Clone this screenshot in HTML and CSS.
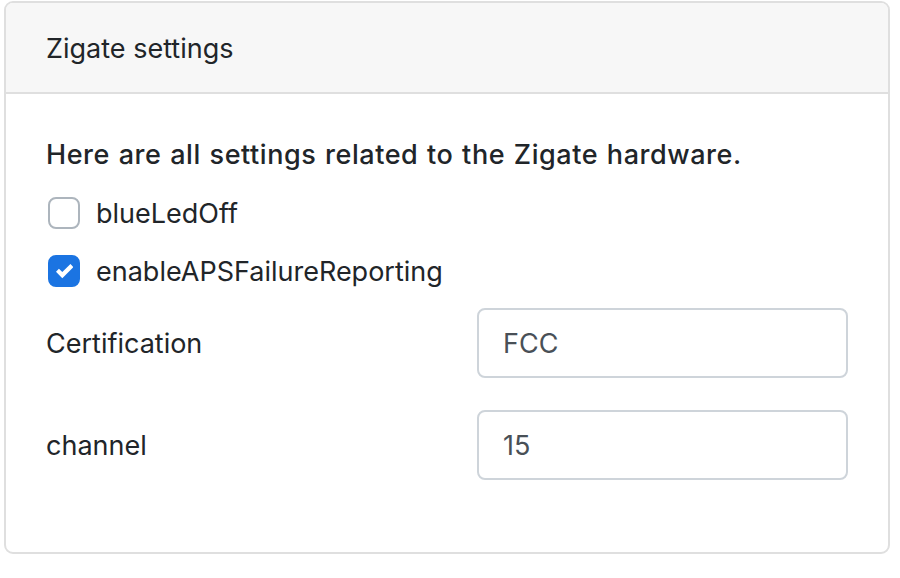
FILE: index.html
```html
<!DOCTYPE html>
<html>
<head>
<meta charset="utf-8">
<link rel="stylesheet" href="styles.css">
</head>
<body>
<div class="card">
  <div class="card-header">Zigate settings</div>
  <div class="card-body">
    <p class="intro">Here are all settings related to the Zigate hardware.</p>
    <label class="check">
      <span class="box"></span>
      <span class="check-label">blueLedOff</span>
    </label>
    <label class="check">
      <span class="box checked">
        <svg viewBox="0 0 8 8" width="17" height="17"><path fill="#fff" d="M6.8.5l-3.83 3.7-1.6-1.55L0 4.1l2.97 3.05L8.2 1.95z"/></svg>
      </span>
      <span class="check-label">enableAPSFailureReporting</span>
    </label>
    <div class="form-row">
      <div class="col"><span class="field-label">Certification</span></div>
      <div class="col col-input"><div class="input">FCC</div></div>
    </div>
    <div class="form-row">
      <div class="col"><span class="field-label">channel</span></div>
      <div class="col col-input"><div class="input">15</div></div>
    </div>
  </div>
</div>
</body>
</html>
```
FILE: styles.css
```css
html, body {
  margin: 0;
  padding: 0;
  background: #fff;
}
body {
  font-family: Inter, "Liberation Sans", sans-serif;
  font-size: 27px;
  line-height: 42px;
  color: #212529;
}
.card {
  margin: 1px 10px 0 4px;
  border: 2px solid #dfdfdf;
  border-radius: 9px;
  overflow: hidden;
}
.card-header {
  background: #f7f7f7;
  border-bottom: 2px solid #dfdfdf;
  padding: 25px 40px 22px;
}
.card-body {
  padding: 40px 40px 40px;
}
.intro {
  margin: 0 0 16px;
  font-weight: 500;
  letter-spacing: 0.55px;
  word-spacing: 1px;
}
.check {
  display: flex;
  align-items: center;
  gap: 16px;
  margin-bottom: 16px;
}
.check-label {
  position: relative;
  top: 1px;
}
.box {
  box-sizing: border-box;
  width: 32px;
  height: 32px;
  margin-left: 2px;
  border: 2px solid #adb5bd;
  border-radius: 8px;
  background: #fff;
  display: flex;
  align-items: center;
  justify-content: center;
}
.box.checked {
  background: #1b74e2;
  border-color: #1b74e2;
}
.form-row {
  display: grid;
  grid-template-columns: 1fr 1fr;
  align-items: center;
  margin-bottom: 32px;
}
.col-input {
  padding-left: 30px;
}
.field-label {
  position: relative;
  top: 1px;
}
.input {
  height: 70px;
  box-sizing: border-box;
  border: 2px solid #ced4da;
  border-radius: 8px;
  padding: 12px 24px;
  line-height: 44px;
  color: #495057;
}
```
